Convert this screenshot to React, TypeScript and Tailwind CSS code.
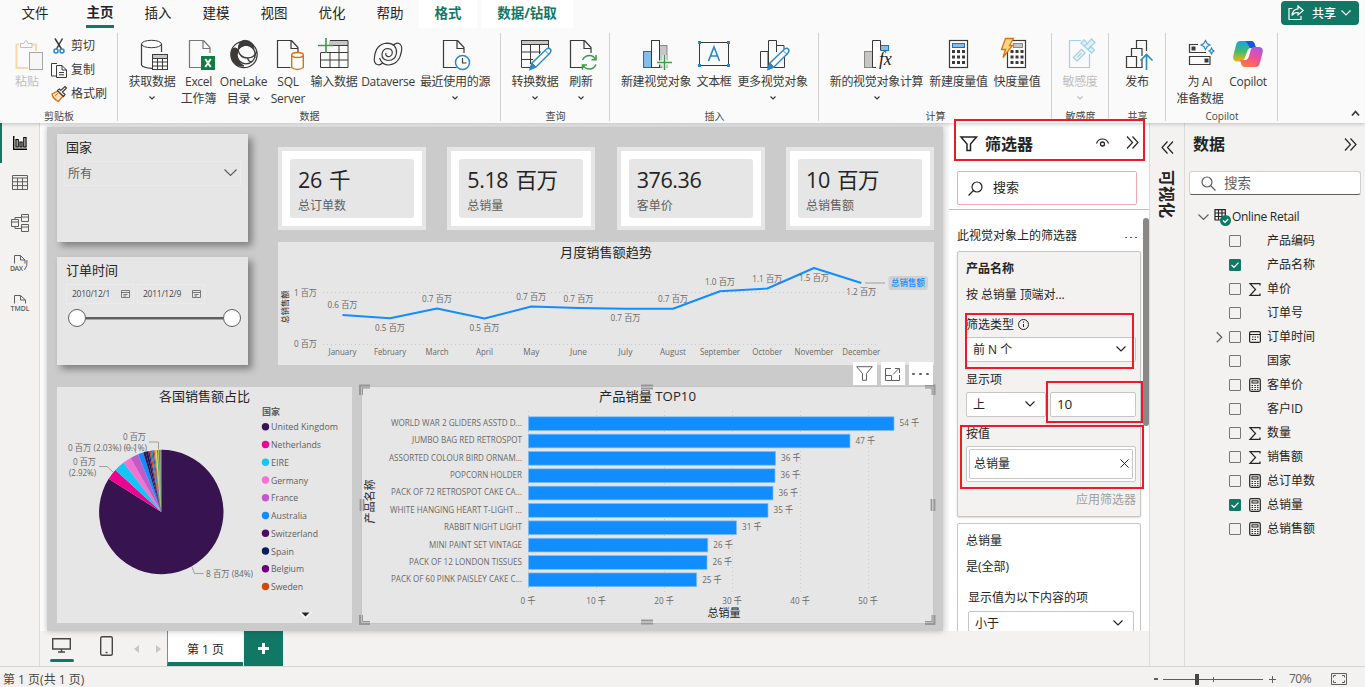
import React from 'react'
import { clsx } from 'clsx'

const FONT = "font-['Open_Sans','Noto_Sans_CJK_SC',sans-serif]"

/* ---------- shared bits ---------- */

type SvgProps = { w?: number; h?: number; className?: string; children: React.ReactNode }

function Icon({ w = 32, h = 32, className, children }: SvgProps) {
  return (
    <svg
      width={w}
      height={h}
      viewBox={`0 0 ${w} ${h}`}
      fill="none"
      stroke="currentColor"
      strokeWidth="1"
      className={clsx("shrink-0 overflow-visible", className)}
    >
      {children}
    </svg>
  )
}

function Chevron({ size = 7, className }: { size?: number; className?: string }) {
  return (
    <Icon w={size} h={size / 2 + 1} className={className}>
      <path d={`M0.5 0.5 L${size / 2} ${size / 2} L${size - 0.5} 0.5`} strokeWidth="1.2" />
    </Icon>
  )
}

function DoubleChevron({ left = false, className }: { left?: boolean; className?: string }) {
  return (
    <Icon w={13} h={13} className={clsx(left && "-scale-x-100", className)}>
      <path d="M1 0.5 L6.5 6.5 L1 12.5 M6.5 0.5 L12 6.5 L6.5 12.5" strokeWidth="1.2" />
    </Icon>
  )
}

/* ---------- ribbon icons ---------- */

const Doc = ({ x }: { x: number }) => (
  <path d={`M${x + 14} 2.5 H${x} V29.5 H${x + 13} M${x + 14} 2.5 L${x + 20.5} 9.5 V15 M${x + 13.5} 2.5 V10.5 H${x + 21}`} strokeWidth="1.2" />
)

const Pencil = ({ x }: { x: number }) => (
  <g transform={`translate(${x} 0)`} stroke="#2b88c8">
    <path d="M1 31.5 L3 25 L17.5 11 Q20 9.5 21.3 11 Q22.8 12.6 21 15 L7 29 Z" fill="#fafafa" strokeWidth="1.4" />
    <path d="M1 31.5 L3 25 L7 29 Z" fill="#2b88c8" />
    <path d="M16 12.5 L20 16.5" />
  </g>
)

const CalcKeys = ({ x }: { x: number }) => (
  <g fill="#3b3a39" stroke="none">
    {[12, 17.5, 23].map((y) => [0, 5, 10].map((dx) => <rect key={`${y}-${dx}`} x={x + dx} y={y} width="3" height="3" />))}
  </g>
)

const PasteIcon = (
  <Icon>
    <path d="M8 6.5 H5.5 V30 H17 M21 6.5 H25 V13" stroke="#f7d9ae" strokeWidth="2" />
    <path d="M9.5 9.5 V5.5 H13 Q15 -0.5 17 5.5 H21 V9.5 Z" stroke="#c2c0be" fill="#fafafa" />
    <rect x="18.5" y="14.5" width="13" height="17" stroke="#a8a6a4" fill="#f6f6f6" />
  </Icon>
)
const GetDataIcon = (
  <Icon>
    <ellipse cx="15.5" cy="6" rx="10" ry="3.7" />
    <path d="M5.5 6 V27 Q7 30 16 30.3 M25.5 6 V14" strokeWidth="1.2" />
    <rect x="16.5" y="16.5" width="15" height="15" fill="#fff" />
    <rect x="17" y="17" width="14" height="3" fill="#c8c6c4" stroke="none" />
    <path d="M16.5 20.5 H31.5 M16.5 24 H31.5 M16.5 28 H31.5 M21.5 20 V31 M26.5 20 V31" strokeWidth="1" />
  </Icon>
)
const ExcelIcon = (
  <Icon>
    <g stroke="#797775">
      <Doc x={6.5} />
    </g>
    <rect x="18" y="18" width="14" height="14" fill="#107c41" stroke="none" />
    <path d="M22.3 21 L27.7 29 M27.7 21 L22.3 29" stroke="#fff" strokeWidth="2" />
  </Icon>
)
const OneLakeIcon = (
  <Icon>
    <circle cx="16" cy="16.5" r="13.2" strokeWidth="1.2" />
    <circle cx="18" cy="16.5" r="9.3" strokeWidth="1.3" />
    <path d="M11.5 5.5 Q13 2.3 17 2.3 Q22 2.3 25 6.5 L26 11 Q22.5 6.5 17 7.2 Q13 8 10.5 11.5 Q10 8 11.5 5.5Z" fill="#3b3a39" />
    <path d="M4.500 11 Q7.500 8.500 10 11.500 Q7.500 18 11 23 Q13 26.500 16 28 Q9 29 5.500 24 Q1.500 17.500 4.500 11Z" fill="#3b3a39" />
    <path d="M10 12 Q12 20 19.500 20 Q26 20 28.500 14 M19.500 20 Q20 23 23.500 24.500" strokeWidth="1.3" />
  </Icon>
)
const SqlIcon = (
  <Icon>
    <Doc x={5.5} />
    <path d="M19.7 17 V29.5 Q25.5 33.5 31.3 29.5 V17" fill="#fff" stroke="#d9730d" strokeWidth="1.4" />
    <ellipse cx="25.5" cy="17" rx="5.8" ry="2.5" fill="#fff" stroke="#d9730d" strokeWidth="1.4" />
  </Icon>
)
const EnterDataIcon = (
  <Icon>
    <rect x="11" y="2.5" width="19" height="4.5" fill="#c8c6c4" stroke="none" />
    <path d="M12 2.5 H30 V29.5 H2.5 V15 M15 7.5 H30 M2.5 14.5 H30 M2.5 22 H30 M12 15 V29.5 M21 7.5 V29.5" />
    <path d="M8 0 V15 M0 7.5 H15" stroke="#3c9a4b" strokeWidth="1.6" />
  </Icon>
)
const DataverseIcon = (
  <Icon>
    <path d="M5 26.5 Q1.5 25 2.5 19 Q4 6 15 5.2 Q25 5.5 24.5 15 Q23.5 22.5 16 22.5 Q9.5 21.5 10 16 Q11 10.5 16 10.5 Q20.5 11 20.3 15 Q19.5 19 16 18.6 Q13 17.5 14 15" strokeWidth="1.2" />
    <path d="M27 5.5 Q30.5 7 29.5 13 Q27.5 26 17 27 Q10 27 7.5 20 M5 26.5 Q8 27.5 10.5 25 M27 5.5 Q24.5 4.5 21.5 7" strokeWidth="1.2" />
  </Icon>
)
const RecentIcon = (
  <Icon>
    <Doc x={4.5} />
    <circle cx="23.5" cy="24.5" r="7" fill="#fff" stroke="#2b88c8" strokeWidth="1.5" />
    <path d="M23.5 20 V25 H27.5" strokeWidth="1.2" />
  </Icon>
)
const TransformIcon = (
  <Icon>
    <rect x="2.5" y="2.5" width="27" height="4" fill="#c8c6c4" />
    <path d="M2.5 7 V29.5 H12 M29.5 7 V11 M2.5 14 H22 M2.5 21.5 H14 M11.5 7 V26 M20.5 7 V16" />
    <Pencil x={10} />
  </Icon>
)
const RefreshIcon = (
  <Icon>
    <Doc x={5.5} />
    <path d="M17.5 22 Q20 17.5 24.5 17.5 Q28.5 17.5 30.5 21.5 M31 17 V21.8 H26.5 M31 26.5 Q29 31 24.5 31 Q20 31 18 27 M17.5 31.8 V27 H22" stroke="#3c9a4b" strokeWidth="1.5" />
  </Icon>
)
const NewVisualIcon = (
  <Icon>
    <rect x="3.5" y="13.5" width="8" height="16" fill="#83beec" stroke="#1b6fb5" />
    <rect x="19.5" y="7.5" width="7.5" height="22" fill="#c8c6c4" stroke="#8a8886" />
    <rect x="11.5" y="2.5" width="8" height="27" fill="#fff" />
    <path d="M24.5 17 V32 M17 24.5 H32" stroke="#fafafa" strokeWidth="4" />
    <path d="M24.5 17 V32 M17 24.5 H32" stroke="#3c9a4b" strokeWidth="1.5" />
  </Icon>
)
const TextBoxIcon = (
  <Icon>
    <rect x="1.5" y="4.5" width="29" height="23" />
    <path d="M10.5 23 L16 9 L21.5 23 M12.5 18 H19.5" stroke="#2b88c8" strokeWidth="1.6" />
    <g fill="#2b88c8" stroke="none">
      <rect x="0" y="3" width="3" height="3" />
      <rect x="29" y="3" width="3" height="3" />
      <rect x="0" y="26" width="3" height="3" />
      <rect x="29" y="26" width="3" height="3" />
    </g>
  </Icon>
)
const MoreVisualIcon = (
  <Icon>
    <path d="M3.5 13.5 H11 V29.5 H3.5 Z M11.5 29.5 V2.5 H19.5 V14 M19.5 7.5 H27 V12 M27.5 18 V29.5 H17" />
    <Pencil x={10} />
  </Icon>
)
const VisualCalcIcon = (
  <Icon>
    <rect x="3.5" y="13.5" width="8" height="16" fill="#c8c6c4" stroke="#8a8886" />
    <rect x="19.5" y="7.5" width="8" height="5" fill="#83beec" stroke="#1b6fb5" />
    <path d="M11.5 29.5 V2.5 H19.5 V12 M11.5 29.5 H15" fill="#fff" />
    <text x="18" y="27" fontSize="18" fill="#252423" stroke="none" className="font-['Liberation_Serif',serif] italic">fx</text>
  </Icon>
)
const MeasureIcon = (
  <Icon>
    <rect x="6.5" y="2.5" width="18" height="27" fill="#fff" strokeWidth="1.2" />
    <rect x="9.5" y="5.5" width="12" height="4" fill="#83beec" stroke="#1b6fb5" />
    <CalcKeys x={9} />
  </Icon>
)
const QuickMeasureIcon = (
  <Icon>
    <rect x="6.5" y="2.5" width="18" height="27" fill="#fff" strokeWidth="1.2" />
    <rect x="12.5" y="5.5" width="9" height="4" fill="#c8c6c4" stroke="#8a8886" />
    <CalcKeys x={9.5} />
    <path d="M4.5 0.5 H12.5 L8.5 7.5 H11.5 L2 19.5 L4.5 11.5 H0.5 Z" fill="#fcd588" stroke="#d9730d" strokeWidth="1.3" />
  </Icon>
)
const SensitivityIcon = (
  <Icon className="text-[#a3d0ea]">
    <path d="M17 2.5 H5.5 V29.5 H25.5 V16" strokeWidth="1.2" />
    <path d="M9.500 19.500 L17.500 11.500 L21 15 L13 23 Z M13 19.500 L17.500 15" strokeWidth="1.3" />
    <path d="M17 5 L20 2 L23.500 5.500 L27.500 1 L31 4.500 L26.500 8.500 L30.500 12 L27.500 15 Z M20 8 L23.500 5.500 M24 12 L26.500 8.500" fill="#e3f1fa" strokeWidth="1.3" />
  </Icon>
)
const PublishIcon = (
  <Icon>
    <path d="M5.5 29.5 V18.5 H15.5 V29.5 Z M10.5 18 V10.5 H21 V18 M21 21 V29.5 H15.5 M15.5 10 V2.5 H25.5 V13" strokeWidth="1.2" />
    <path d="M25.5 32 V17 M19.5 22.5 L25.5 16.5 L31.5 22.5" stroke="#2b88c8" strokeWidth="1.6" />
  </Icon>
)
const AiIcon = (
  <Icon>
    <g transform="translate(4 0)">
      <path d="M10 6.5 H1.5 V14.5 H18 M1.5 18.5 H22 V26.5 H1.5 Z" strokeWidth="1.2" />
      <rect x="4" y="9" width="3" height="3" fill="#3b3a39" />
      <rect x="17" y="21" width="3" height="3" fill="#3b3a39" />
      <path d="M17.5 2.500 L19.200 5.500 L22 7 L19.200 8.500 L17.500 11.500 L15.800 8.500 L13 7 L15.800 5.500 Z M23.500 10 L24.500 12 L26 13 L24.500 14 L23.500 16 L22.500 14 L21 13 L22.500 12 Z" stroke="#2b88c8" strokeWidth="1.2" />
    </g>
  </Icon>
)
const CopilotIcon = (
  <Icon>
    <defs>
      <linearGradient id="cpA" x1="0" y1="0" x2="0" y2="1">
        <stop offset="0" stopColor="#1aa3e8" />
        <stop offset="0.5" stopColor="#3fba6c" />
        <stop offset="1" stopColor="#f5b50f" />
      </linearGradient>
      <linearGradient id="cpB" x1="0.8" y1="0" x2="0.3" y2="1">
        <stop offset="0" stopColor="#a857e0" />
        <stop offset="0.5" stopColor="#ef4f9a" />
        <stop offset="1" stopColor="#fb7a3c" />
      </linearGradient>
    </defs>
    <g stroke="none">
      <path d="M8 3 H19 Q22 3 23 7 L24 10 H19 Q16 10 15 14 L12.500 20.500 Q11 23.500 8 23.500 H5 Q0 23 1.5 17 L4 7 Q5 3 8 3Z" fill="url(#cpA)" />
      <path d="M13 3 H19 Q22 3 23 7 L24 10 H18 Q15 4 13 3Z" fill="#1757d6" />
      <path d="M24 29 H13 Q10 29 9 25.5 L8 22 H13 Q16 22 17 18 L19 11 Q20 9 22 9 H27 Q32 9.5 30.5 15 L28 24.5 Q27 29 24 29Z" fill="url(#cpB)" />
    </g>
  </Icon>
)

/* ---------- ribbon ---------- */

type RibbonItem = { icon: React.ReactNode; label: string; second?: string; arrow?: boolean; width: string; disabled?: boolean }

function RibbonButton({ icon, label, second, arrow, width, disabled }: RibbonItem) {
  return (
    <button
      className={clsx(
        "flex h-[78px] shrink-0 flex-col items-center whitespace-nowrap pt-[10px] text-[12px] leading-[17px] tracking-[-0.2px]",
        width,
        disabled ? "text-[#c0bebc]" : "text-[#3b3a39]"
      )}
    >
      {icon}
      <span className="mt-[3px] tracking-[-0.3px]">{label}</span>
      {second && (
        <span className="flex items-center gap-1">
          {second}
          {arrow && <Chevron size={6} />}
        </span>
      )}
      {!second && arrow && <Chevron size={6} className="mt-[6px]" />}
    </button>
  )
}

const groups: { label: string; width: string; items: RibbonItem[] }[] = [
  {
    label: "数据",
    width: "w-[383px] pl-[10px]",
    items: [
      { icon: GetDataIcon, label: "获取数据", arrow: true, width: "w-[48px]" },
      { icon: ExcelIcon, label: "Excel", second: "工作簿", width: "w-[45px]" },
      { icon: OneLakeIcon, label: "OneLake", second: "目录", arrow: true, width: "w-[45px]" },
      { icon: SqlIcon, label: "SQL", second: "Server", width: "w-[44px]" },
      { icon: EnterDataIcon, label: "输入数据", width: "w-[48px]" },
      { icon: DataverseIcon, label: "Dataverse", width: "w-[60px]" },
      { icon: RecentIcon, label: "最近使用的源", arrow: true, width: "w-[74px]" }
    ]
  },
  {
    label: "查询",
    width: "w-[109px] pl-[10px]",
    items: [
      { icon: TransformIcon, label: "转换数据", arrow: true, width: "w-[48px]" },
      { icon: RefreshIcon, label: "刷新", arrow: true, width: "w-[44px]" }
    ]
  },
  {
    label: "插入",
    width: "w-[209px] pl-[9px]",
    items: [
      { icon: NewVisualIcon, label: "新建视觉对象", width: "w-[74px]" },
      { icon: TextBoxIcon, label: "文本框", width: "w-[42px]" },
      { icon: MoreVisualIcon, label: "更多视觉对象", arrow: true, width: "w-[75px]" }
    ]
  },
  {
    label: "计算",
    width: "w-[233px] pl-[9px]",
    items: [
      { icon: VisualCalcIcon, label: "新的视觉对象计算", arrow: true, width: "w-[97px]" },
      { icon: MeasureIcon, label: "新建度量值", width: "w-[67px]" },
      { icon: QuickMeasureIcon, label: "快度量值", width: "w-[50px]" }
    ]
  },
  {
    label: "敏感度",
    width: "w-[57px] pl-[5px]",
    items: [{ icon: SensitivityIcon, label: "敏感度", arrow: true, width: "w-[46px]", disabled: true }]
  },
  {
    label: "共享",
    width: "w-[57px] pl-[5px]",
    items: [{ icon: PublishIcon, label: "发布", width: "w-[46px]" }]
  },
  {
    label: "Copilot",
    width: "w-[112px] pl-[8px]",
    items: [
      { icon: AiIcon, label: "为 AI", second: "准备数据", width: "w-[52px]" },
      { icon: CopilotIcon, label: "Copilot", width: "w-[44px]" }
    ]
  }
]

function GroupFrame({ label, width, children }: { label: string; width: string; children: React.ReactNode }) {
  return (
    <div className={clsx("relative flex shrink-0 flex-col", width)}>
      <div className="flex h-[80px]">{children}</div>
      <div className="absolute inset-x-0 bottom-0 text-center text-[10px] leading-[13px] text-[#484644]">{label}</div>
      {/* separator */}
      <div className="absolute right-0 top-[5px] h-[88px] w-px bg-[#d2d0ce]" />
    </div>
  )
}

function Ribbon() {
  const tabs = ["插入", "建模", "视图", "优化", "帮助"]
  return (
    <header className="z-10 h-[123px] shrink-0 bg-[#fafafa] shadow-[0_1px_4px_rgba(0,0,0,0.22)]">
      <nav className="flex h-7 pl-[6px] text-[13.5px] text-[#252423]">
        <div className="w-[58px] text-center leading-[26px]">文件</div>
        <div className="ml-[7px] flex w-[58px] flex-col items-center font-bold leading-[25px]">
          主页
          <span className="h-[3px] w-[28px] bg-[#117865]" />
        </div>
        {tabs.map((t) => (
          <div key={t} className="w-[58px] text-center leading-[26px]">{t}</div>
        ))}
        <div className="w-[58px] bg-white text-center font-bold leading-[26px] text-[#117865]">格式</div>
        <div className="ml-1 w-[92px] bg-white text-center font-bold leading-[26px] text-[#117865]">数据/钻取</div>
        <div className="ml-auto mr-[6px] mt-px flex h-6 w-[78px] items-center rounded bg-[#117865] pl-[7px] text-[12px] font-medium text-white">
          <Icon w={16} h={16}>
            <path d="M4.5 3.5 H1 V14.5 H13 V11" strokeWidth="1.2" />
            <path d="M10 1 L15.2 5.5 L10 10 V7.5 Q6 7.3 4 10.5 Q4.5 4.5 10 3.8 Z" strokeWidth="1.2" />
          </Icon>
          <span className="ml-[8px] pt-px">共享</span>
          <Chevron size={10} className="ml-[5px]" />
        </div>
      </nav>
      <div className="flex h-[95px]">
        <GroupFrame label="剪贴板" width="w-[118px]">
          <div className="flex w-[54px] flex-col items-center pt-[10px] text-[12px] leading-[17px] text-[#c0bebc]">
            {PasteIcon}
            <span className="mt-[3px]">粘贴</span>
          </div>
          <div className="-ml-[3px] flex flex-col pt-[6px] text-[12px] leading-6 text-[#3b3a39]">
            <div className="flex items-center gap-1">
              <Icon w={16} h={16}>
                <path d="M4 0.5 L10.5 11 M11.5 0.5 L5.5 11" strokeWidth="1.5" />
                <circle cx="5" cy="13" r="2" stroke="#2b88c8" strokeWidth="1.5" />
                <circle cx="11" cy="13" r="2" stroke="#2b88c8" strokeWidth="1.5" />
              </Icon>
              剪切
            </div>
            <div className="flex items-center gap-1">
              <Icon w={16} h={16}>
                <path d="M5 14 H0.5 V1.5 H6 M5.5 3.5 H11 L15.5 8 V15.5 H5.5 Z M11 3.5 V8 H15.5 M8 10.5 H13 M8 12.8 H13" />
              </Icon>
              复制
            </div>
            <div className="flex items-center gap-1">
              <Icon w={16} h={16}>
                <path d="M1 8 L7 5 L12 10 L7.5 15.5 Q2 13 1 8 Z" fill="#fbe0c0" stroke="#d9730d" strokeWidth="1.3" />
                <path d="M4 10 L7 7" stroke="#d9730d" />
                <path d="M6.5 4.5 L12.5 10.5 L14 8.5 L11.5 6 L15.5 2 L14 0.5 L9.8 4.5 L8.3 3 Z" fill="#fff" strokeWidth="1.2" />
              </Icon>
              格式刷
            </div>
          </div>
        </GroupFrame>
        {groups.map((g) => (
          <GroupFrame key={g.label} label={g.label} width={g.width}>
            {g.items.map((item) => (
              <RibbonButton key={item.label} {...item} />
            ))}
          </GroupFrame>
        ))}
        <div className="ml-auto mr-[5px] flex flex-col justify-end pb-[7px] text-[#3b3a39]">
          <Icon w={9} h={6}>
            <path d="M1 5.5 L4.5 1.5 L8 5.5" strokeWidth="1.8" />
          </Icon>
        </div>
      </div>
    </header>
  )
}

/* ---------- left rail ---------- */

const railItem = "flex h-10 items-center justify-center"

function LeftRail() {
  return (
    <aside className="flex w-10 shrink-0 flex-col border-r border-[#dddbd9] text-[#605e5c]">
      <div className="flex h-10 items-center justify-center border-l-2 border-[#117865] pr-[1px] text-black">
        <Icon w={14} h={14}>
          <path d="M0.7 0 V13.3 H14" strokeWidth="1.4" />
          <path d="M3 11 V3.5 H5.2 V11 Z M7 11 V6 H9 V11 Z M10.8 11 V1.5 H13 V11 Z" strokeWidth="1.2" />
        </Icon>
      </div>
      <div className={clsx(railItem, "pb-[2px]")}>
        <Icon w={16} h={15}>
          <path d="M0.5 0.5 H15.5 V14.5 H0.5 Z M0.5 3 H15.5 M0.5 6.8 H15.5 M0.5 10.6 H15.5 M5.5 3 V14.5 M10.5 3 V14.5" />
        </Icon>
      </div>
      <div className={railItem}>
        <Icon w={18} h={18}>
          <path d="M0.5 5.5 H7.5 V12.5 H0.5 Z M0.5 8 H7.5 M10.5 0.5 H17.5 V7.5 H10.5 Z M10.5 3 H17.5 M10.5 10.5 H17.5 V17.5 H10.5 Z M10.5 13 H17.5 M4 5.5 V3.5 H10.5 M4 12.5 V14.5 H10.5" />
        </Icon>
      </div>
      <div className={railItem}>
        <Icon w={20} h={18}>
          <path d="M4.5 9.5 V1.5 H10.5 L15 6 V9.5 M10.5 1.5 V6 H15 M17 6 Q17.8 12 14.5 16" />
          <text x="0" y="16.5" fontSize="7" fontWeight="600" fill="currentColor" stroke="none" textLength="13">DAX</text>
        </Icon>
      </div>
      <div className={railItem}>
        <Icon w={20} h={18}>
          <path d="M4.5 9.5 V1.5 H10.5 L15.5 6 V9.5 M10.5 1.5 V6 H15.5" />
          <text x="0.5" y="16.8" fontSize="7" fontWeight="600" fill="currentColor" stroke="none" textLength="19" lengthAdjust="spacingAndGlyphs">TMDL</text>
        </Icon>
      </div>
    </aside>
  )
}

/* ---------- report visuals ---------- */

type LabelProps = { x: number; y: number; size?: number; len?: number; anchor?: "start" | "middle" | "end"; fill?: string; weight?: number; children: string }

// y is the optical middle of the text
function Label({ x, y, size = 8.6, len, anchor = "middle", fill = "#6a6866", weight = 400, children }: LabelProps) {
  return (
    <text x={x} y={y + size * 0.36} fontSize={size} textAnchor={anchor} fill={fill} fontWeight={weight} textLength={len} lengthAdjust="spacingAndGlyphs">
      {children}
    </text>
  )
}

function Slicer({ title, children }: { title: string; children: React.ReactNode }) {
  return (
    <section className="h-[108px] w-[191px] bg-[#e6e6e6] px-[7px] shadow-[4px_4px_7px_rgba(0,0,0,0.38)]">
      <h3 className="pl-[2px] pt-[3px] text-[13px] leading-5 text-[#252423]">{title}</h3>
      {children}
    </section>
  )
}

function DateBox({ value }: { value: string }) {
  return (
    <div className="flex h-5 w-[68px] items-center justify-between border border-[#ebebeb] pl-[5px] pr-[3px] text-[8.5px] tracking-[-0.25px] text-[#484644]">
      {value}
      <Icon w={9} h={8} className="mb-px text-[#605e5c]">
        <path d="M0.5 0.5 H8.5 V7.5 H0.5 Z M0.5 2.5 H8.5 M2.5 4.5 H6.5 M2.5 6 H5" strokeWidth="0.8" />
      </Icon>
    </div>
  )
}

const kpis = [
  { value: "26 千", label: "总订单数" },
  { value: "5.18 百万", label: "总销量" },
  { value: "376.36", label: "客单价" },
  { value: "10 百万", label: "总销售额" }
]

const months = [
  { name: "January", x: 64.5, y: 73, label: "0.6 百万", ly: 63, w: 28 },
  { name: "February", x: 112, y: 76.3, label: "0.5 百万", ly: 86, w: 32 },
  { name: "March", x: 159, y: 66.5, label: "0.7 百万", ly: 57, w: 23 },
  { name: "April", x: 206.5, y: 76.5, label: "0.5 百万", ly: 86, w: 17 },
  { name: "May", x: 253.3, y: 64.5, label: "0.7 百万", ly: 55, w: 16 },
  { name: "June", x: 300.5, y: 66, label: "0.7 百万", ly: 57, w: 17 },
  { name: "July", x: 347.5, y: 66.7, label: "0.7 百万", ly: 76, w: 14 },
  { name: "August", x: 395, y: 66.7, label: "0.7 百万", ly: 57, w: 26 },
  { name: "September", x: 442, y: 49.3, label: "1.0 百万", ly: 40, w: 40 },
  { name: "October", x: 489.3, y: 46.5, label: "1.1 百万", ly: 37, w: 30 },
  { name: "November", x: 536, y: 26, label: "1.5 百万", ly: 36, w: 39 },
  { name: "December", x: 583.3, y: 41, label: "1.2 百万", ly: 50, w: 38 }
]

function TrendChart() {
  return (
    <svg width="656" height="123" className="block bg-[#e6e6e6]">
      <Label x={328} y={10} size={13} fill="#252423" len={92}>月度销售额趋势</Label>
      <g transform="translate(7 65) rotate(-90)">
        <Label x={0} y={0} size={8} fill="#252423" len={33}>总销售额</Label>
      </g>
      <Label x={39} y={50.5} anchor="end" len={23}>1 百万</Label>
      <Label x={39} y={102} anchor="end" len={23}>0 百万</Label>
      <path d="M45 50.5 H600 M45 102.5 H600" stroke="#c8c8c8" strokeDasharray="1 3" />
      <polyline points={months.map((m) => `${m.x},${m.y}`).join(" ")} fill="none" stroke="#118dff" strokeWidth="2" strokeLinejoin="round" />
      {months.map((m) => (
        <React.Fragment key={m.name}>
          <Label x={m.x} y={m.ly} len={30}>{m.label}</Label>
          <Label x={m.x} y={110} len={m.w}>{m.name}</Label>
        </React.Fragment>
      ))}
      <path d="M587 41 H607" stroke="#a19f9d" />
      <rect x="610.5" y="34" width="39.5" height="14" rx="3" fill="#d0d0d0" />
      <Label x={630} y={41} len={34} fill="#118dff" weight={500}>总销售额</Label>
    </svg>
  )
}

const countries = [
  { name: "United Kingdom", color: "#37134f", w: 67 },
  { name: "Netherlands", color: "#ee0290", w: 50 },
  { name: "EIRE", color: "#15c6f4", w: 18 },
  { name: "Germany", color: "#f472d0", w: 37 },
  { name: "France", color: "#c05bc9", w: 27 },
  { name: "Australia", color: "#118dff", w: 36 },
  { name: "Switzerland", color: "#4a0d5c", w: 47 },
  { name: "Spain", color: "#0a1f56", w: 23 },
  { name: "Belgium", color: "#6b007b", w: 33 },
  { name: "Sweden", color: "#cc4a0b", w: 32 }
]

// [end angle, fill], clockwise from the top
const slices: [number, string][] = [
  [302.2, "#37134f"],
  [312.4, "#ee0290"],
  [322.7, "#15c6f4"],
  [330.4, "#f472d0"],
  [338.1, "#c05bc9"],
  [343.1, "#118dff"],
  [345.4, "#37134f"],
  [347.6, "#0a1f56"],
  [349, "#6b007b"],
  [350.4, "#cc4a0b"],
  [351.6, "#118a9e"],
  [352.8, "#1b5fc4"],
  [353.9, "#d64550"],
  [355, "#e8a33c"],
  [356, "#f2d13b"],
  [357, "#1aab40"],
  [357.8, "#9dc63c"],
  [358.6, "#197278"],
  [359.2, "#8aa07a"],
  [360, "#6f7068"]
]

const PIE = { cx: 104.3, cy: 125, r: 62.2 }

function slicePath(from: number, to: number) {
  const pt = (deg: number) => {
    const a = (deg * Math.PI) / 180
    return `${PIE.cx + PIE.r * Math.sin(a)} ${PIE.cy - PIE.r * Math.cos(a)}`
  }
  return `M${PIE.cx} ${PIE.cy} L${pt(from)} A${PIE.r} ${PIE.r} 0 ${to - from > 180 ? 1 : 0} 1 ${pt(to)} Z`
}

function CountryPie() {
  return (
    <svg width="295" height="236" className="mt-px block shrink-0 bg-[#e6e6e6]">
      <Label x={147.5} y={9} size={13} fill="#252423" len={91}>各国销售额占比</Label>
      {slices.map(([to, color], i) => (
        <path key={i} d={slicePath(i ? slices[i - 1][0] : 0, to)} fill={color} />
      ))}
      <path d="M92 55 H101.5 V62 M67 61 L77 61 L79 66 M42 79.5 H50 L56 85 M135 180 L137.5 186.5 H146.5" fill="none" stroke="#a19f9d" />
      <Label x={89} y={50} anchor="end" len={23}>0 百万</Label>
      <Label x={11} y={61} anchor="start" len={79}>0 百万 (2.03%) (0.1%)</Label>
      <Label x={39} y={75} anchor="end" len={23}>0 百万</Label>
      <Label x={39} y={86} anchor="end" len={27}>(2.92%)</Label>
      <Label x={149} y={187} anchor="start" len={47}>8 百万 (84%)</Label>
      <Label x={205} y={25} size={9} anchor="start" weight={600} fill="#605e5c" len={18}>国家</Label>
      {countries.map((c, i) => (
        <React.Fragment key={c.name}>
          <circle cx="208.5" cy={39.7 + i * 17.75} r="3.7" fill={c.color} />
          <Label x={214} y={40 + i * 17.75} size={9.4} anchor="start" len={c.w} fill="#605e5c">{c.name}</Label>
        </React.Fragment>
      ))}
      <path d="M241.5 225 H255.5 L248.5 232 Z" fill="#f5f5f5" />
      <path d="M244.5 225.5 H252.5 L248.5 229.5 Z" fill="#252423" />
    </svg>
  )
}

const products = [
  { name: "WORLD WAR 2 GLIDERS ASSTD D...", w: 131, value: "54 千", end: 533 },
  { name: "JUMBO BAG RED RETROSPOT", w: 110, value: "47 千", end: 489 },
  { name: "ASSORTED COLOUR BIRD ORNAM...", w: 133, value: "36 千", end: 414.5 },
  { name: "POPCORN HOLDER", w: 72, value: "36 千", end: 414 },
  { name: "PACK OF 72 RETROSPOT CAKE CA...", w: 131, value: "36 千", end: 412 },
  { name: "WHITE HANGING HEART T-LIGHT ...", w: 132, value: "35 千", end: 407 },
  { name: "RABBIT NIGHT LIGHT", w: 78, value: "31 千", end: 375.5 },
  { name: "MINI PAINT SET VINTAGE", w: 93, value: "26 千", end: 346.8 },
  { name: "PACK OF 12 LONDON TISSUES", w: 113, value: "26 千", end: 346 },
  { name: "PACK OF 60 PINK PAISLEY CAKE C...", w: 131, value: "25 千", end: 335.7 }
]

function TopProducts() {
  const ticks = [0, 10, 20, 30, 40, 50]
  return (
    <svg width="573" height="238" className="ml-[9px] block shrink-0 overflow-visible bg-[#e6e6e6]">
      <rect x="0.5" y="0.5" width="572" height="237" fill="none" stroke="#c4c4c4" />
      <Label x={286.5} y={10} size={13} fill="#252423" len={97}>产品销量 TOP10</Label>
      {ticks.map((t, i) => (
        <React.Fragment key={t}>
          <path d={`M${167.5 + i * 68} 25 V208`} stroke="#c8c8c8" strokeDasharray="1 3" />
          <Label x={167 + i * 68} y={215} len={t ? 19.5 : 15}>{`${t} 千`}</Label>
        </React.Fragment>
      ))}
      {products.map((p, i) => (
        <React.Fragment key={p.name}>
          <Label x={161} y={37 + i * 17.35} anchor="end" len={p.w}>{p.name}</Label>
          <rect x="167.5" y={30.8 + i * 17.35} width={p.end - 167.5} height="13.7" fill="#118dff" stroke="#7fbdf5" strokeWidth="0.7" />
          <Label x={p.end + 5.5} y={37.3 + i * 17.35} anchor="start" len={19.5}>{p.value}</Label>
        </React.Fragment>
      ))}
      <Label x={363} y={227} size={11} fill="#252423" len={33}>总销量</Label>
      <g transform="translate(9 115.5) rotate(-90)">
        <Label x={0} y={0} size={11} fill="#252423" len={44}>产品名称</Label>
      </g>
      {/* selection handles */}
      <path d="M0 9 V0.5 H9 M564 0.5 H572.5 V9 M572.5 229 V237 H564 M9 237 H0 V229" fill="none" stroke="#979797" strokeWidth="4" />
      <path d="M0.5 9 V1 H9 M564 1 H572 V9 M572 229 V236.5 H564 M9 236.5 H0.5 V229" fill="none" stroke="#cfcfcf" strokeWidth="0.8" />
      <path d="M280 -0.5 H292 M280 2.5 H292 M280 234.5 H292 M280 237.5 H292 M-0.5 113 V125 M2.5 113 V125 M570.5 113 V125 M573.5 113 V125" stroke="#979797" strokeWidth="1.8" />
    </svg>
  )
}

const toolButton = "flex h-[23px] w-6 items-center justify-center bg-white"

function Canvas() {
  return (
    <div className="flex h-[508px] w-[909px] bg-gradient-to-r from-[#fdfdfd] to-[#f7f7f7] pl-[7px] pt-1">
      <div className="relative h-[504px] w-[896px] bg-[#cbcbcb] pl-[10px] pt-[7px] shadow-[0_0_6px_rgba(0,0,0,0.25)]">
        <div className="flex">
          <div className="flex flex-col gap-[15px]">
            <Slicer title="国家">
              <div className="mt-[4px] flex h-[25px] items-center justify-between border border-[#ebebeb] px-[3px] pt-px text-[12px] text-[#605e5c]">
                所有
                <Chevron size={13} className="mb-[2px]" />
              </div>
            </Slicer>
            <Slicer title="订单时间">
              <div className="ml-[2px] mt-[4px] flex gap-[3px]">
                <DateBox value="2010/12/1" />
                <DateBox value="2011/12/9" />
              </div>
              <div className="ml-[4px] mt-[5px] flex items-center">
                <span className="h-[18px] w-[18px] rounded-full border-[1.5px] border-[#605e5c] bg-white" />
                <span className="h-[3px] w-[138px] border-b border-[#a5a5a5] bg-[#605e5c]" />
                <span className="h-[18px] w-[18px] rounded-full border-[1.5px] border-[#605e5c] bg-white" />
              </div>
            </Slicer>
          </div>
          <div className="ml-[30px] mt-[13px] w-[656px]">
            <div className="flex justify-between">
              {kpis.map((k) => (
                <div key={k.label} className="h-[83px] w-[148px] border-[4px] border-[#e6e6e6] bg-white p-2">
                  <div className="h-[59px] w-[124px] rounded-[3px] bg-[#e6e6e6] pl-2 pt-[6px]">
                    <div className="text-[21.5px] leading-[30px] tracking-[-0.4px] text-[#252423] [word-spacing:2px]">{k.value}</div>
                    <div className="mt-[2px] text-[12px] leading-[18px] text-[#605e5c]">{k.label}</div>
                  </div>
                </div>
              ))}
            </div>
            <div className="mt-3">
              <TrendChart />
            </div>
          </div>
        </div>
        <div className="mt-[21px] flex">
          <CountryPie />
          <TopProducts />
        </div>
        {/* hover toolbar of the selected visual */}
        <div className="absolute right-[10px] top-[235px] flex gap-1 text-[#605e5c]">
          <div className={clsx(toolButton, "pr-px")}>
            <Icon w={17} h={15}>
              <path d="M0.7 0.7 H16.3 L10.5 7.5 V14.3 H6.5 V7.5 Z" />
            </Icon>
          </div>
          <div className={clsx(toolButton, "pr-px pt-px")}>
            <Icon w={15} h={13}>
              <path d="M6 0.5 H0.5 V12.5 H14.5 V7 M0.5 7.5 H6.5 V12.5 M8 6.5 L14 0.5 M10 0.5 H14.5 V5" />
            </Icon>
          </div>
          <div className={clsx(toolButton, "gap-[4px] pr-px")}>
            <i className="h-[2px] w-[3px] rounded-full bg-[#605e5c]" />
            <i className="h-[2px] w-[3px] rounded-full bg-[#605e5c]" />
            <i className="h-[2px] w-[3px] rounded-full bg-[#605e5c]" />
          </div>
        </div>
      </div>
    </div>
  )
}

function PageTabs() {
  return (
    <div className="flex h-[35px] items-start">
      <div className="ml-[10px] flex h-[31px] w-6 flex-col items-center justify-between pr-px pt-[7px]">
        <Icon w={19} h={15} className="text-[#484644]">
          <path d="M0.7 0.7 H18.3 V11 H0.7 Z M9.5 11 V14 M6 14 H13" strokeWidth="1.4" />
        </Icon>
        <span className="h-[3px] w-6 rounded-sm bg-[#117865]" />
      </div>
      <Icon w={13} h={20} className="ml-[26px] mt-[5px] text-[#484644]">
        <rect x="0.7" y="0.7" width="11.6" height="18.6" rx="1.5" strokeWidth="1.4" />
        <path d="M5.5 16.5 H7.5" strokeWidth="1.4" />
      </Icon>
      <div className="ml-[21px] mt-[14px] flex gap-[17px] text-[#c8c6c4]">
        <svg width="5" height="8"><path d="M5 0 V8 L0 4 Z" fill="currentColor" /></svg>
        <svg width="5" height="8"><path d="M0 0 V8 L5 4 Z" fill="currentColor" /></svg>
      </div>
      <div className="ml-[6px] h-[35px] w-[76px] border-b-4 border-l border-b-[#117865] border-l-[#8a8886] bg-white text-center text-[12px] leading-[37px] text-[#252423]">
        第 1 页
      </div>
      <div className="ml-px flex h-[35px] w-[39px] items-center justify-center bg-[#117865]">
        <Icon w={11} h={11} className="text-white">
          <path d="M5.5 0 V11 M0 5.5 H11" strokeWidth="3" />
        </Icon>
      </div>
    </div>
  )
}

/* ---------- filter pane ---------- */

function SearchIcon({ flip = false }: { flip?: boolean }) {
  return (
    <Icon w={15} h={15} className={clsx(flip && "-scale-x-100")}>
      <circle cx="6" cy="6" r="5" strokeWidth="1.2" />
      <path d="M9.5 9.5 L14.5 14.5" strokeWidth="1.2" />
    </Icon>
  )
}

const fieldBox = "flex items-center justify-between rounded-[2px] border border-[#c8c6c4] bg-white"

function FilterPane() {
  return (
    <div className="relative h-[508px] w-[200px] shrink-0 overflow-hidden bg-white text-[12px] text-[#252423]">
      <div className="flex h-[42px] items-center pl-[11px] pr-[10px]">
        <Icon w={18} h={16}>
          <path d="M1 1 H16.5 L10.5 8 V14.5 H7 V8 Z" strokeWidth="1.5" />
        </Icon>
        <h2 className="ml-[7px] text-[16px] font-bold">筛选器</h2>
        <Icon w={13} h={9} className="mb-[3px] ml-auto mr-[17px]">
          <path d="M0.5 5.5 Q2 1 6.5 1 Q11 1 12.5 5.5" strokeWidth="1.2" />
          <circle cx="6.5" cy="6" r="2" strokeWidth="1.3" />
        </Icon>
        <DoubleChevron className="mb-[3px]" />
      </div>
      <div className="border-b border-[#f3a9ad] pb-1 pl-2 pt-[6px]">
        <div className="flex h-[34px] w-[180px] items-center gap-[10px] rounded-[2px] border border-[#f3a9ad] pl-[10px] text-[13px]">
          <SearchIcon flip />
          搜索
        </div>
      </div>
      <div className="flex h-[41px] items-end justify-between pb-[5px] pl-2 pr-3 leading-5">
        此视觉对象上的筛选器
        <span className="flex gap-[3px] pb-[8px]">
          <i className="h-[1.5px] w-[2px] bg-[#605e5c]" />
          <i className="h-[1.5px] w-[2px] bg-[#605e5c]" />
          <i className="h-[1.5px] w-[2px] bg-[#605e5c]" />
        </span>
      </div>
      <div className="ml-2 flex h-[266px] w-[184px] flex-col rounded-[2px] border border-[#c8c6c4] bg-[#f3f2f1] pl-2 shadow-[0_1px_2px_rgba(0,0,0,0.15)]">
        <div className="mt-[7px] font-bold leading-5">产品名称</div>
        <div className="mt-[6px] leading-5 tracking-[-0.1px]">按 总销量 顶端对...</div>
        <div className="mt-[10px] flex items-center gap-1 leading-5">
          筛选类型
          <Icon w={11} h={11} className="mb-[2px]">
            <circle cx="5.5" cy="5.5" r="5" />
            <path d="M5.5 5 V8 M5.5 2.5 V3.7" />
          </Icon>
        </div>
        <div className={clsx(fieldBox, "mt-[2px] h-[25px] w-[170px] pl-[6px] pr-[9px]")}>
          前 N 个
          <Chevron size={10} className="mb-[2px]" />
        </div>
        <div className="mt-[8px] leading-5">显示项</div>
        <div className="mt-[2px] flex gap-1">
          <div className={clsx(fieldBox, "h-[25px] w-[80px] pl-[6px] pr-[10px]")}>
            上
            <Chevron size={10} className="mb-[2px]" />
          </div>
          <div className={clsx(fieldBox, "h-[25px] w-[86px] pl-[6px] text-[13.5px] tracking-[-0.2px]")}>10</div>
        </div>
        <div className="mt-[7px] leading-5">按值</div>
        <div className={clsx(fieldBox, "mt-[2px] h-[36px] w-[170px] p-[2px]")}>
          <div className={clsx(fieldBox, "h-[30px] w-full pl-[4px] pr-[3px]")}>
            总销量
            <Icon w={9} h={9} className="mb-px">
              <path d="M0.5 0.5 L8.5 8.5 M8.5 0.5 L0.5 8.5" />
            </Icon>
          </div>
        </div>
        <div className="mr-1 mt-[8px] text-right leading-5 text-[#a19f9d]">应用筛选器</div>
      </div>
      <div className="ml-2 mt-[6px] h-[150px] w-[184px] rounded-[2px] border border-[#c8c6c4] pl-2">
        <div className="mt-[7px] leading-5">总销量</div>
        <div className="mt-[6px] leading-5">是(全部)</div>
        <div className="ml-[2px] mt-[11px] leading-5">显示值为以下内容的项</div>
        <div className={clsx(fieldBox, "ml-[2px] mt-[3px] h-[25px] w-[166px] pl-[6px] pr-[10px]")}>
          小于
          <Chevron size={10} className="mb-[2px]" />
        </div>
      </div>
      {/* scrollbar thumb */}
      <div className="absolute right-0 top-[95px] h-[208px] w-[6px] rounded-full bg-[#8a8886]" />
    </div>
  )
}

/* ---------- data pane ---------- */

const SigmaIcon = (
  <Icon w={12} h={13}>
    <path d="M11 2.5 V0.7 H1 L6.5 6.5 L1 12.3 H11 V10.5" strokeWidth="1.2" />
  </Icon>
)
const CalcIcon = (
  <Icon w={12} h={14}>
    <rect x="0.7" y="0.7" width="10.6" height="12.6" rx="1.5" strokeWidth="1.2" />
    <rect x="3" y="2.8" width="6" height="2.2" />
    <path d="M2.5 7.5 H4 M5.3 7.5 H6.8 M8 7.5 H9.5 M2.5 9.5 H4 M5.3 9.5 H6.8 M8 9.5 H9.5 M2.5 11.5 H4 M5.3 11.5 H6.8 M8 11.5 H9.5" strokeWidth="1.1" />
  </Icon>
)
const CalendarIcon = (
  <Icon w={12} h={12}>
    <rect x="0.6" y="0.6" width="10.8" height="10.8" rx="1.5" strokeWidth="1.2" />
    <path d="M0.6 3.5 H11.4 M3 6 H4.5 M5.5 6 H7 M8 6 H9.5 M3 8.5 H4.5 M5.5 8.5 H7" strokeWidth="1.2" />
  </Icon>
)

const fields: { name: string; icon?: React.ReactNode; checked?: boolean; expandable?: boolean }[] = [
  { name: "产品编码" },
  { name: "产品名称", checked: true },
  { name: "单价", icon: SigmaIcon },
  { name: "订单号" },
  { name: "订单时间", icon: CalendarIcon, expandable: true },
  { name: "国家" },
  { name: "客单价", icon: CalcIcon },
  { name: "客户ID" },
  { name: "数量", icon: SigmaIcon },
  { name: "销售额", icon: SigmaIcon },
  { name: "总订单数", icon: CalcIcon },
  { name: "总销量", icon: CalcIcon, checked: true },
  { name: "总销售额", icon: CalcIcon }
]

function DataPane() {
  return (
    <aside className="w-[181px] shrink-0 border-l border-[#dddbd9] text-[12px] text-[#252423]">
      <div className="flex h-[42px] items-center justify-between pl-2 pr-2">
        <h2 className="text-[16px] font-bold">数据</h2>
        <DoubleChevron />
      </div>
      <div className="ml-1 mt-[6px] flex h-[24px] w-[172px] items-center gap-[8px] rounded-[3px] border border-[#d2d0ce] border-b-[#605e5c] bg-white pl-[11px] text-[13.5px] text-[#605e5c]">
        <SearchIcon />
        搜索
      </div>
      <div className="mt-[10px] flex h-6 items-center pl-[13px]">
        <Chevron size={11} className="text-[#605e5c]" />
        <span className="relative mb-1 ml-[5px]">
          <Icon w={12} h={12}>
            <path d="M1 0.7 H11.3 V11 H1 Z M1 4 H11.3 M1 7.5 H11.3 M4.5 0.7 V11 M8 0.7 V11" strokeWidth="1.2" />
          </Icon>
          <svg width="11" height="11" className="absolute left-[6px] top-[6px]">
            <circle cx="5.5" cy="5.5" r="5.5" fill="#117865" />
            <path d="M3 5.5 L5 7.5 L8.2 4" fill="none" stroke="#fff" strokeWidth="1.2" />
          </svg>
        </span>
        <span className="ml-[6px] tracking-[-0.3px]">Online Retail</span>
      </div>
      {fields.map((f) => (
        <div key={f.name} className="flex h-6 items-center pl-[30px]">
          <span className="flex w-[14px] items-center">
            {f.expandable && <Chevron size={11} className="-ml-[1px] -rotate-90 text-[#605e5c]" />}
          </span>
          <span
            className={clsx(
              "flex h-3 w-3 shrink-0 items-center justify-center rounded-[1px] border",
              f.checked ? "border-[#117865] bg-[#117865] text-white" : "border-[#797775]"
            )}
          >
            {f.checked && (
              <Icon w={8} h={6}>
                <path d="M0.5 3 L3 5.5 L7.5 0.7" strokeWidth="1.2" />
              </Icon>
            )}
          </span>
          <span className="flex w-[26px] items-center justify-center pl-[1px]">{f.icon}</span>
          <span>{f.name}</span>
        </div>
      ))}
    </aside>
  )
}

function StatusBar() {
  return (
    <footer className="flex h-[21px] items-center border-t border-[#d8d6d4] pl-[3px] pt-[4px] text-[12px] text-[#484644]">
      <span className="pt-px">第 1 页(共 1 页)</span>
      <div className="ml-auto flex items-center pr-[18px] text-[#605e5c]">
        <span className="h-[2px] w-1 bg-[#605e5c]" />
        <Icon w={100} h={12} className="ml-[5px]">
          <path d="M0 6.5 H100 M50.5 4 V9" />
          <rect x="32" y="1" width="4" height="11" fill="#484644" stroke="none" />
        </Icon>
        <Icon w={7} h={7} className="ml-[6px]">
          <path d="M3.5 0 V7 M0 3.5 H7" />
        </Icon>
        <span className="ml-[13px] w-6 tracking-[-0.5px]">70%</span>
        <Icon w={16} h={12} className="ml-[18px]">
          <path d="M0.5 0.5 H15.5 V11.5 H0.5 Z M2.5 4.5 V2.5 H5 M11 2.5 H13.5 V4.5 M13.5 7.5 V9.5 H11 M5 9.5 H2.5 V7.5" />
        </Icon>
      </div>
    </footer>
  )
}

export default function App() {
  return (
    <div className={clsx("relative flex h-[687px] w-[1365px] flex-col overflow-hidden bg-[#f3f2f1]", FONT)}>
      <Ribbon />
      <main className="flex h-[543px] shrink-0">
        <LeftRail />
        <div className="w-[909px] shrink-0">
          <Canvas />
          <PageTabs />
        </div>
        <FilterPane />
        <aside className="flex w-[35px] shrink-0 flex-col items-center border-l border-[#dddbd9] pt-[18px] text-[#252423]">
          <DoubleChevron left />
          <span className="mt-[16px] text-[16px] font-bold leading-4 [text-orientation:sideways] [writing-mode:vertical-rl]">可视化</span>
        </aside>
        <DataPane />
      </main>
      <StatusBar />

      {/* highlight frames */}
      <div className="pointer-events-none absolute left-[954px] top-[119px] z-20 h-[42px] w-[191px] border-2 border-[#ed1c24]" />
      <div className="pointer-events-none absolute left-[965px] top-[313px] z-20 h-[56px] w-[169px] border-2 border-[#ed1c24]" />
      <div className="pointer-events-none absolute left-[1046px] top-[381px] z-20 h-[42px] w-[97px] border-2 border-[#ed1c24]" />
      <div className="pointer-events-none absolute left-[960px] top-[425px] z-20 h-[64px] w-[184px] border-2 border-[#ed1c24]" />
    </div>
  )
}
